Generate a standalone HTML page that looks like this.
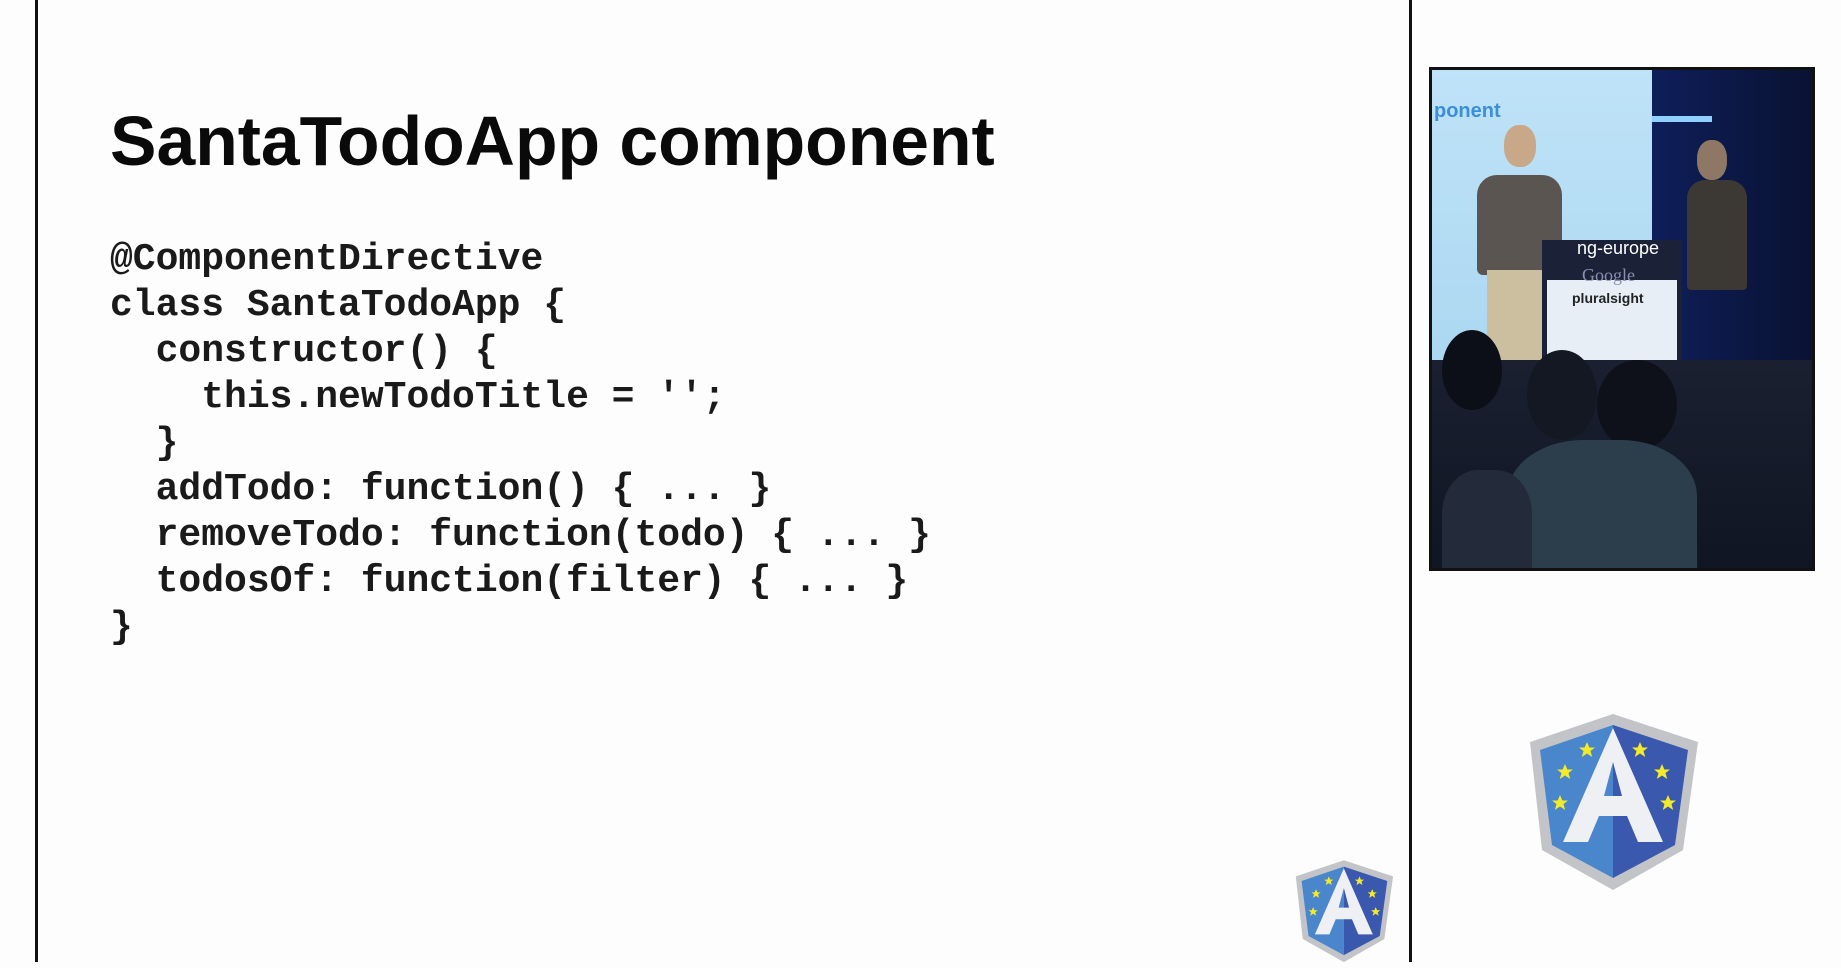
<!DOCTYPE html>
<html><head><meta charset="utf-8"><style>
*{margin:0;padding:0;box-sizing:border-box}
body{width:1841px;height:962px;background:#fdfdfd;position:relative;overflow:hidden;font-family:"Liberation Sans",sans-serif}
.vl{position:absolute;top:0;width:3px;height:962px;background:#111}
h1{position:absolute;left:110px;top:106px;font-size:70px;line-height:70px;font-weight:bold;color:#0a0a0a;white-space:nowrap;transform:scaleX(0.995);transform-origin:left}
pre{position:absolute;left:110px;top:237px;font-family:"Liberation Mono",monospace;font-weight:bold;font-size:38px;line-height:46px;color:#1a1a1a}
.photo{position:absolute;left:1429px;top:67px;width:386px;height:504px;background:#0b1022;border:3px solid #111;overflow:hidden}
.photo div{position:absolute}
</style></head><body>
<div class="vl" style="left:35px"></div>
<div class="vl" style="left:1409px"></div>
<h1>SantaTodoApp component</h1>
<pre>@ComponentDirective
class SantaTodoApp {
  constructor() {
    this.newTodoTitle = '';
  }
  addTodo: function() { ... }
  removeTodo: function(todo) { ... }
  todosOf: function(filter) { ... }
}</pre>
<div class="photo">
  <div style="left:0;top:0;width:220px;height:330px;background:linear-gradient(#bfe3f8,#a9d6f0)"></div>
  <div style="left:220px;top:0;width:166px;height:330px;background:linear-gradient(90deg,#0e1e5a,#091230)"></div>
  <div style="left:220px;top:46px;width:60px;height:6px;background:#8fd0ff"></div>
  <div style="left:2px;top:30px;color:#3a8fd8;font-weight:bold;font-size:20px">ponent</div>
  <div style="left:45px;top:105px;width:85px;height:100px;background:#5a5550;border-radius:20px 20px 6px 6px"></div>
  <div style="left:72px;top:55px;width:32px;height:42px;background:#c9a88a;border-radius:45%"></div>
  <div style="left:55px;top:200px;width:60px;height:140px;background:#cbbf9f"></div>
  <div style="left:110px;top:170px;width:140px;height:175px;background:#1b2238"></div>
  <div style="left:115px;top:210px;width:130px;height:130px;background:#e8eef5"></div>
  <div style="left:145px;top:168px;color:#fff;font-size:18px">ng-europe</div>
  <div style="left:150px;top:195px;color:#8a8fb0;font-size:18px;font-family:'Liberation Serif',serif">Google</div>
  <div style="left:140px;top:220px;color:#222;font-size:14px;font-weight:bold">pluralsight</div>
  <div style="left:255px;top:110px;width:60px;height:110px;background:#3c3833;border-radius:18px 18px 4px 4px"></div>
  <div style="left:265px;top:70px;width:30px;height:40px;background:#8e7865;border-radius:45%"></div>
  <div style="left:0;top:290px;width:386px;height:214px;background:linear-gradient(#1a2030,#0f1522)"></div>
  <div style="left:10px;top:260px;width:60px;height:80px;background:#0c0f18;border-radius:50%"></div>
  <div style="left:95px;top:280px;width:70px;height:90px;background:#141822;border-radius:50%"></div>
  <div style="left:165px;top:290px;width:80px;height:90px;background:#0e111a;border-radius:50%"></div>
  <div style="left:75px;top:370px;width:190px;height:140px;background:#2c3e4c;border-radius:40% 40% 0 0"></div>
  <div style="left:10px;top:400px;width:90px;height:110px;background:#232b3a;border-radius:40% 40% 0 0"></div>
</div>
<svg width="0" height="0" style="position:absolute">
<defs>
<polygon id="st" points="0,-8 2.4,-2.5 8,-2.5 3.5,1 5.2,7 0,3.5 -5.2,7 -3.5,1 -8,-2.5 -2.4,-2.5"/>
<g id="logo">
<polygon points="93,14 178,42 163,150 93,190 22,150 10,42" fill="#c2c4c8"/>
<polygon points="93,25 93,178 32,145 20,50" fill="#4a86cc"/>
<polygon points="93,25 168,50 155,145 93,178" fill="#3a58ad"/>
<path d="M93,28 L143,142 L118,142 L107,116 L79,116 L68,142 L43,142 Z M93,62 L84,96 L102,96 Z" fill="#eef0f3" fill-rule="evenodd"/>
<g fill="#f3ea2a">
<use href="#st" x="67" y="50"/><use href="#st" x="45" y="72"/><use href="#st" x="40" y="103"/>
<use href="#st" x="120" y="50"/><use href="#st" x="142" y="72"/><use href="#st" x="148" y="103"/>
</g>
</g>
</defs>
</svg>
<svg style="position:absolute;left:1520px;top:700px" width="190" height="200" viewBox="0 0 190 200"><use href="#logo"/></svg>
<svg style="position:absolute;left:1290px;top:852px" width="110" height="116" viewBox="0 0 190 200"><use href="#logo"/></svg>
</body></html>
